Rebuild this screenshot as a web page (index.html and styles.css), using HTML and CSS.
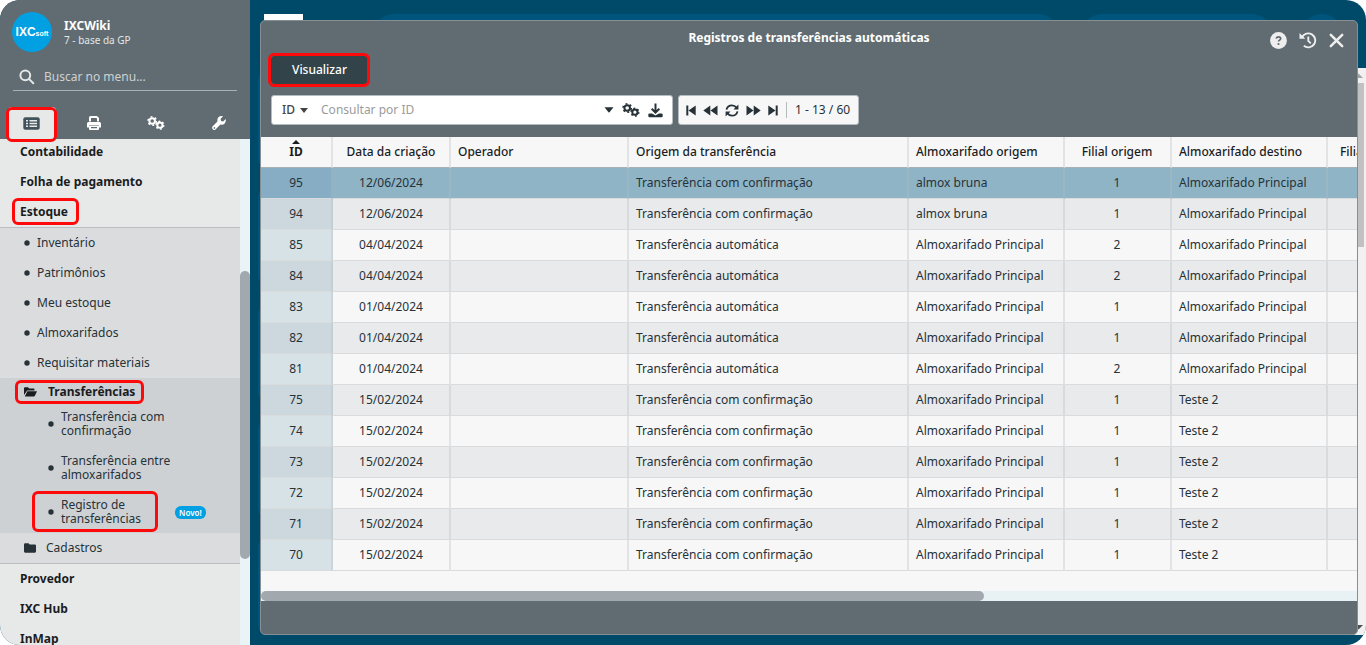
FILE: index.html
```html
<!DOCTYPE html>
<html lang="pt-BR">
<head>
<meta charset="utf-8">
<title>Registros de transferências automáticas</title>
<link rel="stylesheet" href="styles.css">
</head>
<body>
<svg class="defs" aria-hidden="true">
  <symbol id="gears" viewBox="0 0 18 14">
    <circle cx="5.2" cy="5" r="2.800" fill="none" stroke="currentColor" stroke-width="2"/>
    <circle cx="5.2" cy="5" r="4.200" fill="none" stroke="currentColor" stroke-width="1.500" stroke-dasharray="1.900 2.498"/>
    <circle cx="12.9" cy="9.2" r="2.600" fill="none" stroke="currentColor" stroke-width="2"/>
    <circle cx="12.9" cy="9.2" r="3.900" fill="none" stroke="currentColor" stroke-width="1.500" stroke-dasharray="1.800 2.284"/>
  </symbol>
  <symbol id="dot" viewBox="0 0 6 6"><circle cx="3" cy="3" r="2.700" fill="currentColor"/></symbol>
</svg>
<div class="app">
  <aside class="sidebar">
    <header class="side-head">
      <div class="profile">
        <div class="logo"><b>IXC</b><i>soft</i></div>
        <div class="who"><strong>IXCWiki</strong><span>7 - base da GP</span></div>
      </div>
      <label class="search">
        <svg width="16" height="16" viewBox="0 0 16 16" fill="none" stroke="currentColor" stroke-width="2"><circle cx="6.3" cy="6.3" r="4.900"/><path d="M9.900 9.900L14.300 14.300" stroke-linecap="round"/></svg>
        <input type="text" placeholder="Buscar no menu..." aria-label="Buscar no menu">
      </label>
      <nav class="tabs">
        <button class="tab active marked" aria-label="Menu"><svg width="17" height="13" viewBox="0 0 17 13"><rect x=".3" y=".3" width="16.400" height="12.400" rx="2" fill="#42525a"/><path d="M3 3.700h2M3 6.500h2M3 9.300h2M6.500 3.700h7.600M6.500 6.500h7.600M6.500 9.300h7.600" stroke="#e7e9e9" stroke-width="1.400"/></svg></button>
        <button class="tab" aria-label="Imprimir"><svg width="16" height="16" viewBox="0 0 16 16"><path fill="#fff" d="M3 6.500V2.500Q3 1 4.500 1H11l2 2V6.500h-2V3.800L10.300 3H5V6.500zM2.500 7h11Q15 7 15 8.500V12q0 .6-.6.6H13V10H3v2.600H1.600Q1 12.600 1 12V8.500Q1 7 2.500 7zM3 10.500h10V14q0 1-1 1H4q-1 0-1-1zM5 12v1.300h6V12z" fill-rule="evenodd"/></svg></button>
        <button class="tab" aria-label="Configurações"><svg width="18" height="14"><use href="#gears"/></svg></button>
        <button class="tab" aria-label="Ferramentas"><svg width="16" height="16" viewBox="0 0 16 16"><path fill="#fff" d="M14.700 3.900L12.200 6.400 10 6 9.600 3.800 12.100 1.300Q9.500.3 7.400 2.300 5.700 4.200 6.400 6.600L1.500 11.500Q.5 12.700 1.500 13.900l.6.6q1.200 1 2.400 0L9.400 9.600q2.400.7 4.300-1Q15.600 6.500 14.700 3.900zM3.100 12.200a.8.8 0 1 1 0 1.500.8.800 0 0 1 0-1.500z"/></svg></button>
      </nav>
    </header>
    <div class="menu-wrap">
      <ul class="menu">
        <li><a class="top" href="#">Contabilidade</a></li>
        <li><a class="top" href="#">Folha de pagamento</a></li>
        <li><a class="top" href="#"><span class="marked m-estoque">Estoque</span></a>
          <ul class="sub">
            <li><a href="#"><svg class="dot"><use href="#dot"/></svg>Inventário</a></li>
            <li><a href="#"><svg class="dot"><use href="#dot"/></svg>Patrimônios</a></li>
            <li><a href="#"><svg class="dot"><use href="#dot"/></svg>Meu estoque</a></li>
            <li><a href="#"><svg class="dot"><use href="#dot"/></svg>Almoxarifados</a></li>
            <li><a href="#"><svg class="dot"><use href="#dot"/></svg>Requisitar materiais</a></li>
            <li class="group">
              <a class="group-title" href="#"><span class="marked m-transf"><svg width="13" height="10" viewBox="0 0 13 10"><path fill="currentColor" d="M0 8V1.200Q0 .3 1 .3h3l1.200 1.200h4.300q1 0 1 1v.9H3.200zM3.400 4.200H13L10.900 8.800q-.4.800-1.200.8H.8z"/></svg>Transferências</span></a>
              <ul class="leafs">
                <li><a href="#"><svg class="dot"><use href="#dot"/></svg><span>Transferência com<br>confirmação</span></a></li>
                <li><a href="#"><svg class="dot"><use href="#dot"/></svg><span>Transferência entre<br>almoxarifados</span></a></li>
                <li><a href="#"><span class="marked m-reg"><svg class="dot"><use href="#dot"/></svg><span>Registro de<br>transferências</span></span><em class="new">Novo!</em></a></li>
              </ul>
            </li>
            <li><a class="folder" href="#"><svg width="12" height="10" viewBox="0 0 12 10"><path fill="currentColor" d="M0 8.600V1.400Q0 .3 1.100.3H4.500L5.800 1.600h5.100Q12 1.600 12 2.700v5.900q0 1.100-1.100 1.100H1.100Q0 9.700 0 8.600z"/></svg>Cadastros</a></li>
          </ul>
        </li>
        <li><a class="top" href="#">Provedor</a></li>
        <li><a class="top" href="#">IXC Hub</a></li>
        <li><a class="top" href="#">InMap</a></li>
      </ul>
      <div class="menu-scroll"><div class="menu-thumb"></div></div>
    </div>
  </aside>

  <main class="stage">
    <div class="bg-tab"></div><div class="bg-pill"></div><div class="bg-circle"></div>
    <div class="bg-tiles"><i></i><i></i><i></i><i></i><i></i></div>
    <div class="page-scroll">
      <svg width="15" height="15" viewBox="0 0 15 15"><path fill="#a3a3a3" d="M3 10l4.500-4.500L12 10z"/></svg>
      <div class="page-thumb"></div>
      <svg width="15" height="15" viewBox="0 0 15 15"><path fill="#505050" d="M3 5l4.500 4.500L12 5z"/></svg>
    </div>
    <section class="window">
      <header class="titlebar">
        <h1>Registros de transferências automáticas</h1>
        <div class="actions">
          <button aria-label="Ajuda"><svg width="17" height="17" viewBox="0 0 17 17"><circle cx="8.500" cy="8.500" r="8.400" fill="#eee"/><path d="M6.300 6.600Q6.500 4.800 8.500 4.800q2.200 0 2.200 1.800 0 1-1.200 1.600-1 .5-1 1.400" fill="none" stroke="#606c71" stroke-width="1.700"/><circle cx="8.500" cy="12" r="1.100" fill="#606c71"/></svg></button>
          <button aria-label="Histórico"><svg width="18" height="17" viewBox="0 0 18 17" fill="none" stroke="#eee" stroke-width="1.900"><path d="M3 5.200A7 7 0 1 1 4.800 13.800"/><path d="M9.300 4.500v4.300l2.500 2.500"/><path d="M.5 1v5.800h5.800z" fill="#eee" stroke="none"/></svg></button>
          <button aria-label="Fechar"><svg width="15" height="15" viewBox="0 0 15 15" stroke="#eee" stroke-width="2.500" stroke-linecap="round"><path d="M1.800 1.800l11.400 11.400M13.200 1.800L1.800 13.200"/></svg></button>
        </div>
      </header>
      <button class="view marked">Visualizar</button>
      <div class="toolbar">
        <div class="query">
          <button class="field">ID<svg width="8" height="5" viewBox="0 0 8 5"><path fill="currentColor" d="M0 0h8L4 5z"/></svg></button>
          <input type="text" placeholder="Consultar por ID" aria-label="Consultar por ID">
          <button aria-label="Opções"><svg width="10" height="6" viewBox="0 0 10 6"><path fill="currentColor" d="M.5.300h9L5.500 5.300q-.5.500-1 0z"/></svg></button>
          <button aria-label="Configurar"><svg width="18" height="14"><use href="#gears"/></svg></button>
          <button aria-label="Baixar"><svg width="15" height="15" viewBox="0 0 15 15"><path d="M7.500.5v8.500M3.700 5.700l3.800 3.800 3.800-3.800" fill="none" stroke="currentColor" stroke-width="2"/><path fill="currentColor" d="M1.500 10.500h2.600l3.400 2 3.400-2h2.600q1.200 0 1.200 1.200v1.400q0 1.200-1.200 1.200h-12q-1.200 0-1.200-1.200v-1.400Q.3 10.500 1.500 10.500z"/></svg></button>
        </div>
        <div class="pager">
          <button aria-label="Primeira"><svg width="10" height="11" viewBox="0 0 10 11"><path fill="currentColor" d="M.3.500h2v10h-2zM9.700.500v10L2.500 5.500z"/></svg></button>
          <button aria-label="Anterior"><svg width="15" height="11" viewBox="0 0 15 11"><path fill="currentColor" d="M7.300.500v10L.3 5.500zM14.500.500v10l-7-5z"/></svg></button>
          <button aria-label="Atualizar"><svg width="14" height="13" viewBox="0 0 14 13"><path d="M1.500 5.600Q2.500 1.300 7 1.300q2.700 0 4.500 2.300M12.500 7.400Q11.500 11.700 7 11.700q-2.700 0-4.500-2.300" fill="none" stroke="currentColor" stroke-width="1.800"/><path fill="currentColor" d="M13.400.4v5H8.500zM.6 12.600v-5h4.900z"/></svg></button>
          <button aria-label="Próxima"><svg width="15" height="11" viewBox="0 0 15 11"><path fill="currentColor" d="M.5.500v10l7-5zM7.700.500v10l7-5z"/></svg></button>
          <button aria-label="Última"><svg width="10" height="11" viewBox="0 0 10 11"><path fill="currentColor" d="M7.700.500h2v10h-2zM.3.500v10l7.200-5z"/></svg></button>
          <span class="count">1 - 13 / 60</span>
        </div>
      </div>
      <div class="grid">
        <table>
          <colgroup><col class="c-id"><col class="c-date"><col class="c-op"><col class="c-orig"><col class="c-alm"><col class="c-fil"><col class="c-alm"><col class="c-fil"></colgroup>
          <thead><tr><th class="sorted">ID</th><th>Data da criação</th><th>Operador</th><th>Origem da transferência</th><th>Almoxarifado origem</th><th>Filial origem</th><th>Almoxarifado destino</th><th>Filial destino</th></tr></thead>
          <tbody>
            <tr class="selected"><td>95</td><td>12/06/2024</td><td></td><td>Transferência com confirmação</td><td>almox bruna</td><td>1</td><td>Almoxarifado Principal</td><td></td></tr>
            <tr><td>94</td><td>12/06/2024</td><td></td><td>Transferência com confirmação</td><td>almox bruna</td><td>1</td><td>Almoxarifado Principal</td><td></td></tr>
            <tr><td>85</td><td>04/04/2024</td><td></td><td>Transferência automática</td><td>Almoxarifado Principal</td><td>2</td><td>Almoxarifado Principal</td><td></td></tr>
            <tr><td>84</td><td>04/04/2024</td><td></td><td>Transferência automática</td><td>Almoxarifado Principal</td><td>2</td><td>Almoxarifado Principal</td><td></td></tr>
            <tr><td>83</td><td>01/04/2024</td><td></td><td>Transferência automática</td><td>Almoxarifado Principal</td><td>1</td><td>Almoxarifado Principal</td><td></td></tr>
            <tr><td>82</td><td>01/04/2024</td><td></td><td>Transferência automática</td><td>Almoxarifado Principal</td><td>1</td><td>Almoxarifado Principal</td><td></td></tr>
            <tr><td>81</td><td>01/04/2024</td><td></td><td>Transferência automática</td><td>Almoxarifado Principal</td><td>2</td><td>Almoxarifado Principal</td><td></td></tr>
            <tr><td>75</td><td>15/02/2024</td><td></td><td>Transferência com confirmação</td><td>Almoxarifado Principal</td><td>1</td><td>Teste 2</td><td></td></tr>
            <tr><td>74</td><td>15/02/2024</td><td></td><td>Transferência com confirmação</td><td>Almoxarifado Principal</td><td>1</td><td>Teste 2</td><td></td></tr>
            <tr><td>73</td><td>15/02/2024</td><td></td><td>Transferência com confirmação</td><td>Almoxarifado Principal</td><td>1</td><td>Teste 2</td><td></td></tr>
            <tr><td>72</td><td>15/02/2024</td><td></td><td>Transferência com confirmação</td><td>Almoxarifado Principal</td><td>1</td><td>Teste 2</td><td></td></tr>
            <tr><td>71</td><td>15/02/2024</td><td></td><td>Transferência com confirmação</td><td>Almoxarifado Principal</td><td>1</td><td>Teste 2</td><td></td></tr>
            <tr><td>70</td><td>15/02/2024</td><td></td><td>Transferência com confirmação</td><td>Almoxarifado Principal</td><td>1</td><td>Teste 2</td><td></td></tr>
          </tbody>
        </table>
      </div>
      <div class="h-scroll"><div class="h-thumb"></div></div>
      <footer class="status"></footer>
    </section>
  </main>
</div>
</body>
</html>
```
FILE: styles.css
```css
* { box-sizing: border-box; }
body { margin: 0; background: #fff; font: 12px/16px "Noto Sans", sans-serif; color: #263238; }
ul { list-style: none; margin: 0; padding: 0; }
a { color: inherit; text-decoration: none; }
button, input { font: inherit; color: inherit; background: none; border: 0; padding: 0; }
svg { display: block; flex: none; }
.defs { position: absolute; width: 0; height: 0; }
.app { display: flex; height: 100vh; border-radius: 20px; overflow: hidden; background: #004a69; }

/* red highlight frames drawn over the highlighted elements */
.marked { position: relative; }
.marked::after { content: ""; position: absolute; inset: -3px; border: 3px solid #ff0a0a; border-radius: 6px; pointer-events: none; }

/* sidebar */
.sidebar { display: flex; flex-direction: column; flex: none; width: 250px; }
.side-head { display: flex; flex-direction: column; height: 139px; flex: none; background: #606c71; color: #fff; }
.profile { display: flex; gap: 12px; padding: 12px 12px 0; }
.logo { display: flex; align-items: center; justify-content: center; width: 40px; height: 40px; border-radius: 50%; background: #00a0e3; font-family: "Liberation Sans", sans-serif; }
.logo b { font-size: 12px; }
.logo i { font-size: 7px; font-weight: bold; font-style: normal; padding-top: 3px; }
.who { display: flex; flex-direction: column; padding-top: 7px; }
.who strong { line-height: 14px; }
.who span { font-size: 10px; line-height: 14px; color: #e4e7e8; }
.search { display: flex; align-items: center; gap: 9px; height: 28px; margin: 11px 13px 0; padding: 1px 6px 0; border-bottom: 1px solid #a9b0b3; color: #e4e7e8; }
.search input { flex: 1; min-width: 0; outline: 0; }
.search input::placeholder { color: #cdd1d3; opacity: 1; }
.tabs { display: grid; grid-template-columns: repeat(4, 1fr); margin-top: auto; height: 32px; }
.tab { display: flex; align-items: center; justify-content: center; color: #fff; }
.tab.active { margin: 0 7px 0 8px; background: #e7e9e9; border-radius: 4px 4px 0 0; }
.tab.active::after { inset: 0 -1px -3px -2px; }
.menu-wrap { display: flex; flex: 1; min-height: 0; overflow: hidden; background: #e7e9e9; }
.menu { flex: 1; margin-top: -2px; }
.menu a { display: flex; align-items: center; height: 30px; padding: 0 0 0 20px; }
.menu .top { font-weight: bold; color: #1a1d1f; }
.m-estoque::after { inset: -6px -11px -5px -8px; }
.sub { background: #dadcdd; border-top: 1px solid #b9bfc3; border-bottom: 1px solid #b9bfc3; }
.menu .sub a { padding-left: 24px; gap: 7px; }
.dot { width: 6px; height: 6px; }
.group { background: #ced1d4; }
.menu .group-title { height: 23px; padding: 4px 0 0 24px; font-weight: bold; color: #1a1d1f; }
.m-transf { display: flex; align-items: center; gap: 11px; }
.m-transf::after { inset: -4px -9px -4px -9px; }
.menu .leafs a { height: 44px; padding: 2px 0 0 48px; line-height: 14px; }
.m-reg { display: flex; align-items: center; gap: 7px; }
.m-reg::after { inset: -7px -17px -6px -16px; }
.new { margin-left: 27px; padding: 0 4px; border-radius: 6px; background: #00a0e3; color: #fff; font: 600 8px/13px "Noto Sans", sans-serif; }
.menu .sub .folder { gap: 10px; padding-bottom: 1px; }
.menu-scroll { width: 10px; background: #eaf3f6; display: grid; grid-template-rows: 26% 57% 1fr; }
.menu-thumb { grid-row: 2; border-radius: 5px; background: #a1a9ae; }

/* work area */
.stage { position: relative; flex: 1; min-width: 0; display: flex; padding: 20px 8px 10px 10px; }
.bg-tab { position: absolute; left: 14px; top: 14px; width: 39px; height: 20px; background: #fff; }
.bg-pill { position: absolute; left: 124px; right: 308px; top: 14px; height: 40px; border-radius: 20px; background: #00557c; }
.bg-pill::after { content: ""; position: absolute; left: 100%; top: 0; width: 190px; height: 40px; margin-left: 24px; border-radius: 20px; background: #00557c; }
.bg-circle { position: absolute; right: 24px; top: 14px; width: 40px; height: 40px; border-radius: 50%; background: #00557c; }
.bg-tiles { position: absolute; left: 8px; top: 71px; bottom: 10px; width: 100px; display: flex; flex-direction: column; gap: 18px; }
.bg-tiles i { flex: 1; border-radius: 10px; background: #00557c; }
.page-scroll { position: absolute; right: 0; top: 68px; bottom: 10px; width: 15px; display: flex; flex-direction: column; justify-content: space-between; background: #f1f1f1; }
.page-thumb { height: 29%; margin: 0 2px auto; background: #c1c1c1; }
.window { position: relative; flex: 1; min-width: 0; display: flex; flex-direction: column; border: 1px solid #858f94; border-radius: 5px; background: #606c71; overflow: hidden; }
.titlebar { display: grid; grid-template-columns: 1fr auto 1fr; height: 35px; color: #fff; }
.titlebar h1 { grid-column: 2; margin: 0; padding-top: 9px; font-size: 12px; line-height: 16px; }
.actions { display: flex; justify-content: flex-end; align-items: flex-start; gap: 12px; padding: 11px 13px 0 0; }
.actions button { display: flex; align-items: center; height: 17px; }
.view { align-self: flex-start; width: 97px; height: 28px; margin-left: 10px; border-radius: 4px; background: #33434a; color: #fff; font-weight: 500; }
.view::after { inset: -3px -2px -3px -3px; }
.toolbar { display: flex; gap: 5px; padding: 11px 10px 12px; }
.query, .pager { display: flex; align-items: center; height: 30px; border-radius: 3px; border: 1px solid #b5bcbf; }
.query { width: 402px; padding: 0 9px 0 10px; gap: 8px; background: #fff; }
.query .field { display: flex; align-items: center; gap: 5px; font-weight: 500; color: #444; }
.query input { flex: 1; min-width: 0; margin-left: 5px; outline: 0; }
.query input::placeholder { color: #9b9b9b; opacity: 1; }
.pager { padding: 0 8px 0 7px; gap: 7px; background: #f7f7f7; }
.count { margin-left: 1px; border-left: 1px solid #b5bcbf; padding-left: 8px; }
.grid { flex: 1; min-height: 0; overflow: hidden; background: #f7f7f7; }
table { width: 1166px; table-layout: fixed; border-collapse: separate; border-spacing: 0; }
.c-id { width: 72px; } .c-date { width: 118px; } .c-op { width: 178px; } .c-orig { width: 280px; } .c-alm { width: 156px; } .c-fil { width: 107px; }
.c-fil:last-child { width: 99px; }
th, td { height: 31px; padding: 0 8px; text-align: left; white-space: nowrap; border-right: 2px solid rgba(180, 186, 192, .32); border-bottom: 1px solid #d9dbdd; }
th:nth-child(n+3), td:nth-child(n+3) { padding-left: 8px; }
th { height: 31px; font-weight: 500; color: #1a1d1f; border-bottom-color: #a9b0b3; }
th:nth-child(1), td:nth-child(1), th:nth-child(2), td:nth-child(2), th:nth-child(6), td:nth-child(6), th:nth-child(8) { text-align: center; }
th:nth-child(n+3), td:nth-child(n+3) { padding-left: 7px; }
.sorted { position: relative; font-weight: bold; }
.sorted::before { content: ""; position: absolute; left: 31px; top: 3px; border: 4px solid transparent; border-top: 0; border-bottom: 4px solid #1a1d1f; }
tbody tr:nth-child(even) { background: #e9eaeb; }
tbody td:first-child { background: #d7e2e6; }
tbody tr:nth-child(even) td:first-child { background: #cdd8de; }
tbody .selected { background: #8fb4c6; }
tbody .selected td:first-child { background: #86adc3; }
.h-scroll { height: 10px; background: #e8f1f4; }
.h-thumb { width: 66%; height: 10px; border-radius: 5px; background: #a1a9ae; }
.status { height: 33px; }
```
